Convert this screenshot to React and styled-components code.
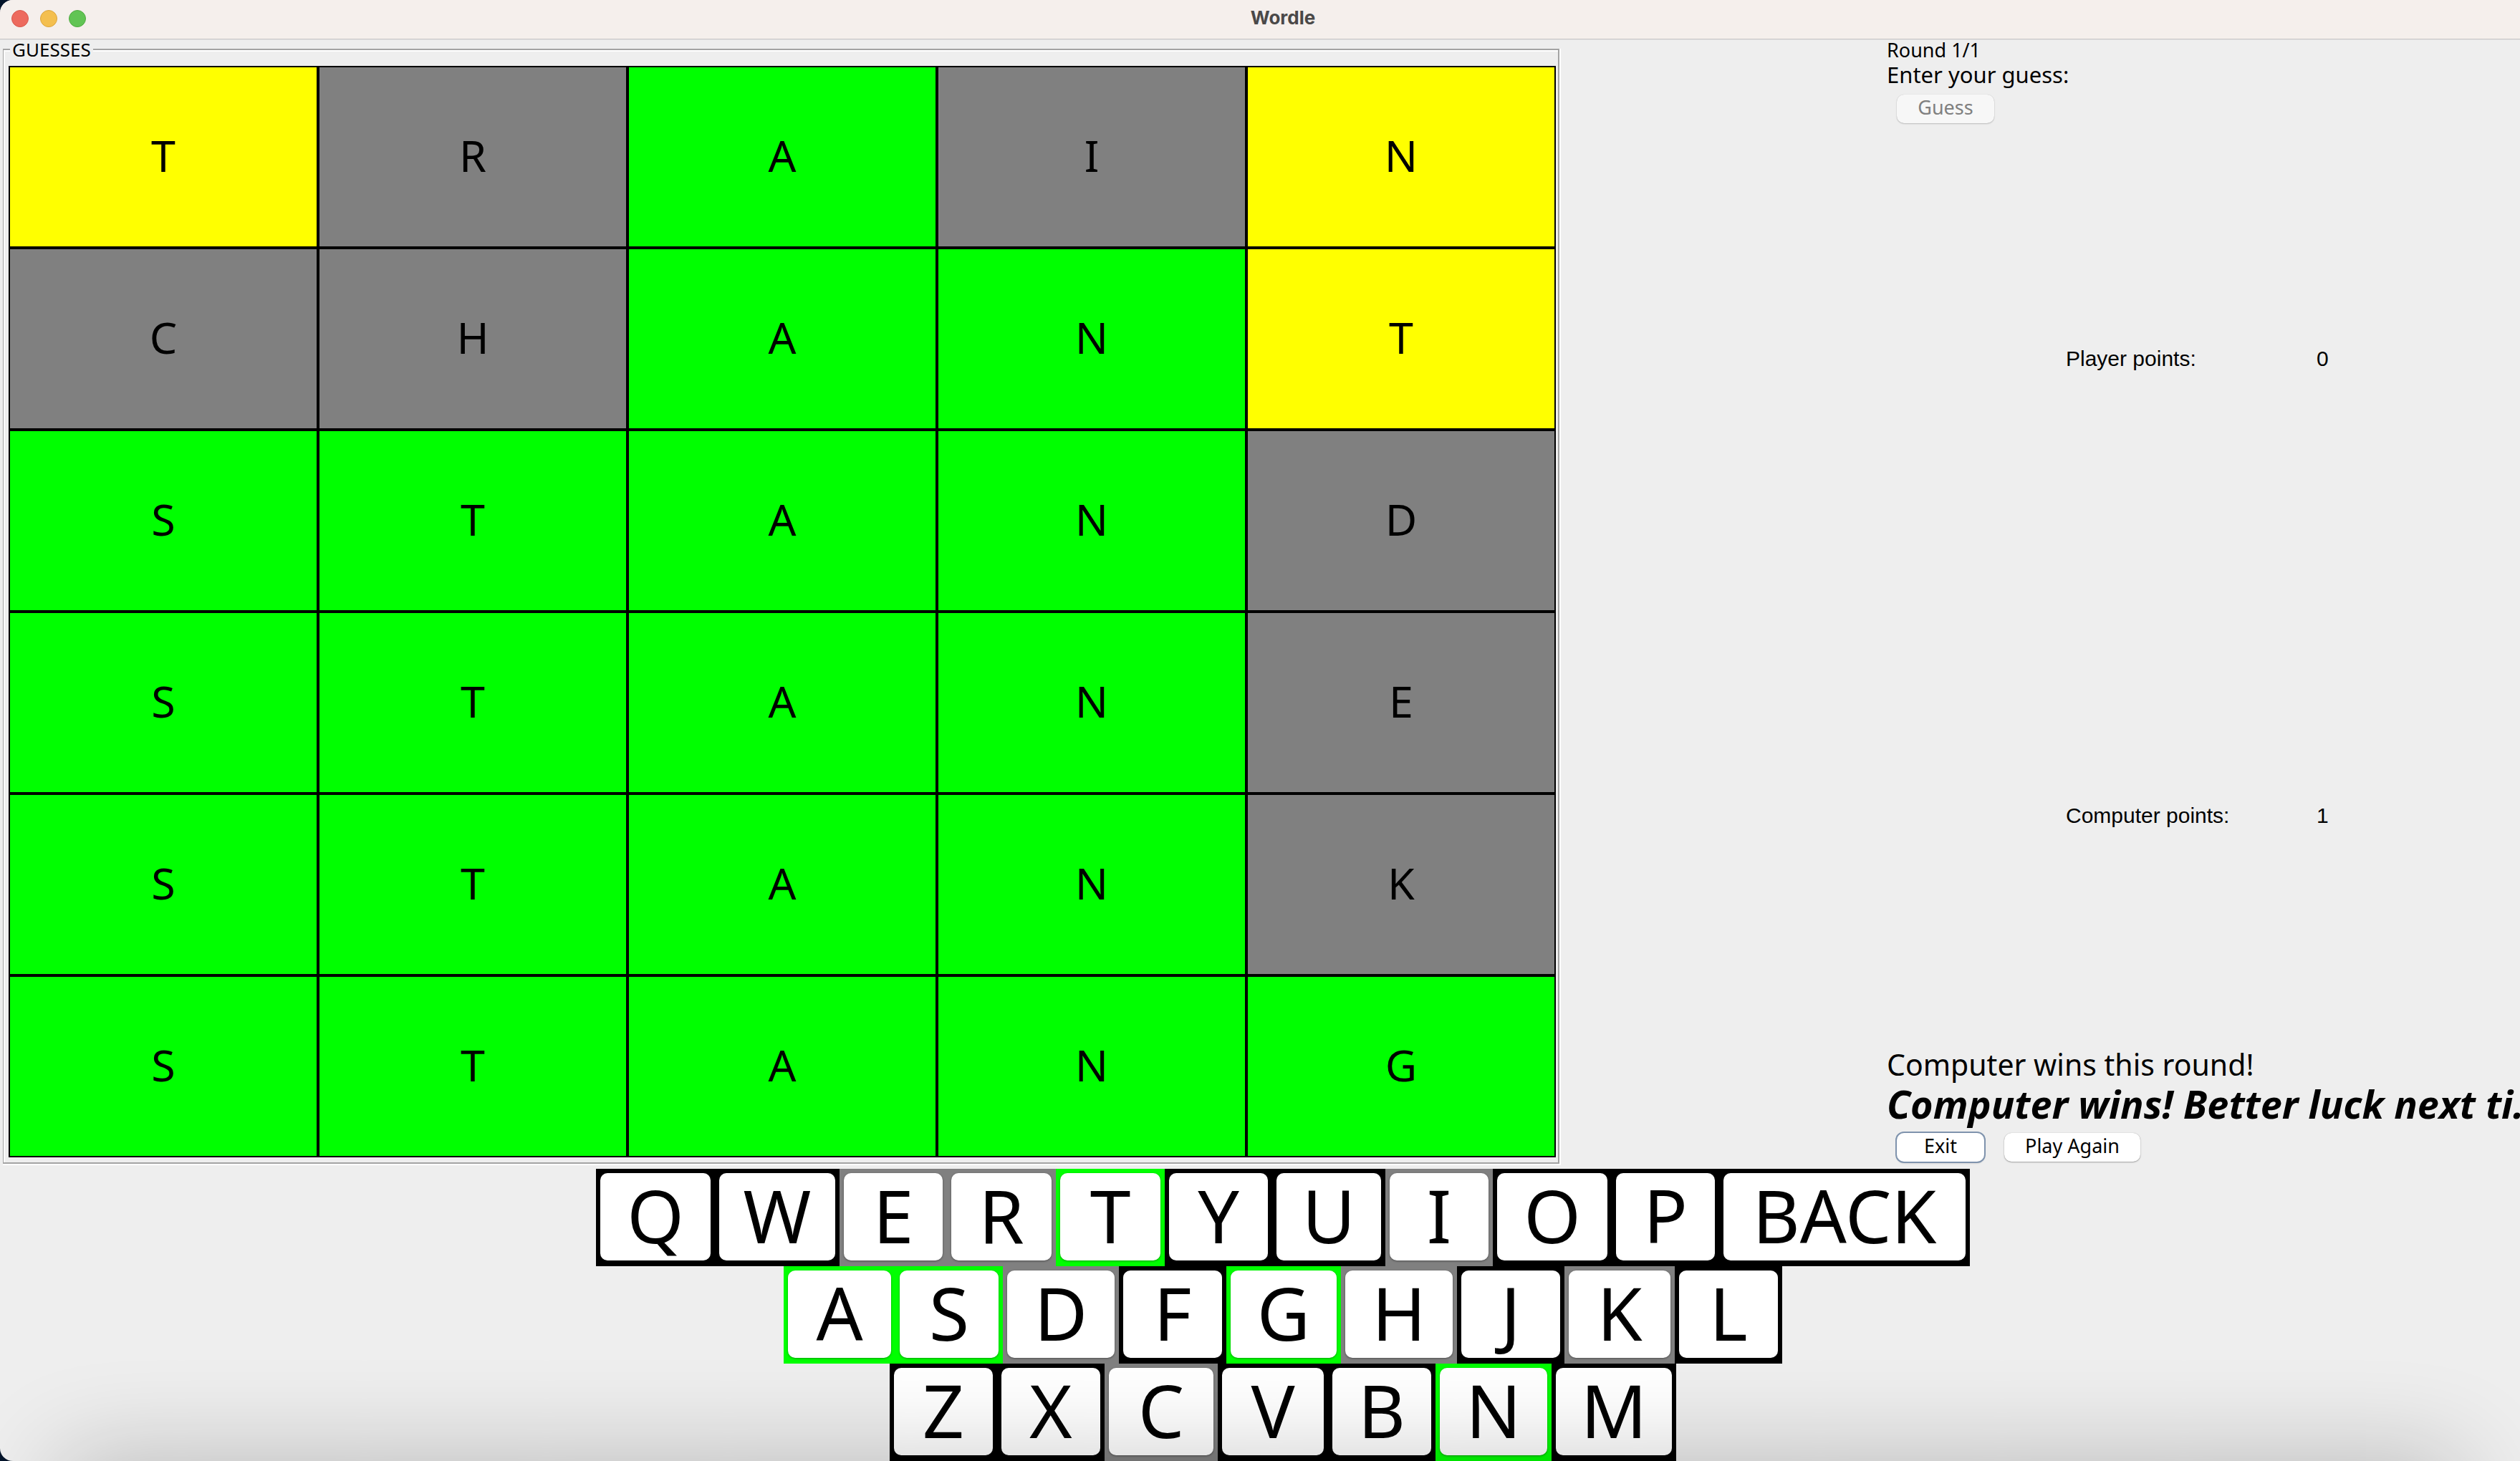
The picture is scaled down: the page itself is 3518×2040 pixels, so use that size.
import React from "react";
import styled, { createGlobalStyle } from "styled-components";

const colors = {
  yellow: "#ffff00",
  gray: "#808080",
  green: "#00ff00",
  black: "#000000",
};

const GlobalStyle = createGlobalStyle`
  * { box-sizing: border-box; }
  html, body, #root { height: 100%; }
  body {
    margin: 0;
    overflow: hidden;
    background: #03142a;
    color: #000;
    font-family: "Noto Sans", "Open Sans", sans-serif;
  }
`;

const Desktop = styled.div`
  position: relative;
  min-height: 100vh;
  overflow: hidden;
  display: flex;
`;

/* The window is a little wider than the screen and runs off its right edge. */
const Window = styled.div`
  flex: none;
  width: calc(100% + 64px);
  display: flex;
  flex-direction: column;
  background: #eeeeee;
  border-radius: 18px;
  overflow: hidden;
`;

const TitleBar = styled.header`
  display: grid;
  grid-template-columns: 1fr auto 1fr;
  align-items: center;
  height: 55px;
  padding: 0 16px 2px;
  background: #f5efec;
  border-bottom: 1px solid #c9c8c8;
`;

const Lights = styled.div`
  display: flex;
  gap: 16px;
`;

const Light = styled.button`
  width: 24px;
  height: 24px;
  padding: 0;
  border: 1px solid ${(p) => p.$edge};
  border-radius: 50%;
  background: ${(p) => p.$fill};
`;

const Title = styled.h1`
  margin: 0;
  padding-bottom: 2px;
  font: 700 26px/32px Inter, sans-serif;
  color: #4a4848;
`;

const Main = styled.main`
  flex: 1;
  display: grid;
  grid-template-columns: 2180fr 454fr 948fr;
  border-top: 1px solid #e2e1e1;
`;

const Board = styled.fieldset`
  display: flex;
  min-width: 0;
  margin: 0 3px 7px 4px;
  padding: 10px 3px 7px 7px;
  border: 2px solid #a3a3a3;
  border-left-width: 1px;
  box-shadow: inset 2px 2px #fff, 2px 0 #fff, 0 2px #fff, 2px 2px #fff;
`;

const Legend = styled.legend`
  margin-left: 2px;
  padding: 0 3px;
  background: #eeeeee;
  font-size: 26px;
  line-height: 26px;
`;

const Grid = styled.div`
  flex: 1;
  height: 100%;
  display: grid;
  grid-template-columns: repeat(5, 1fr);
  grid-auto-rows: 1fr;
`;

const Cell = styled.div`
  display: flex;
  align-items: center;
  justify-content: center;
  padding-bottom: 4px;
  border: 2px solid #000;
  background: ${(p) => colors[p.$state]};
  font-size: 61px;
  line-height: 80px;
`;

const Side = styled.section`
  grid-column: 3;
  display: flex;
  flex-direction: column;
  white-space: nowrap;
`;

const Round = styled.div`
  font-size: 27px;
  line-height: 28px;
`;

const Prompt = styled.div`
  font-size: 31px;
  line-height: 40px;
`;

const Buttons = styled.div`
  display: flex;
  gap: 28px;
  padding: 8px 14px 10px;
`;

const Button = styled.button`
  height: 40px;
  padding: 0 0 4px;
  width: ${(p) => p.$width}px;
  border: 0;
  border-radius: 10px;
  background: #fff;
  box-shadow: ${(p) =>
    p.$focused
      ? "0 0 0 2px #7f93ad, 0 2px 3px rgba(0,0,0,.2)"
      : "0 0 1px rgba(0,0,0,.3), 0 1px 2px rgba(0,0,0,.3)"};
  font-family: inherit;
  font-size: 27px;
  line-height: 36px;
  color: #000;
  &:disabled {
    background: #f7f7f7;
    color: #808080;
    box-shadow: 0 0 1px rgba(0,0,0,.2), 0 1px 2px rgba(0,0,0,.2);
  }
`;

const Scores = styled.dl`
  flex: 1;
  margin: 0;
  padding: 0 0 6px 250px;
  display: grid;
  grid-template-columns: 350px auto;
  grid-auto-rows: 1fr;
  align-items: center;
  justify-content: start;
  font: 30px/36px "Liberation Sans", Arial, sans-serif;
  dd { margin: 0; }
`;

const RoundResult = styled.div`
  font-size: 41px;
  line-height: 44px;
`;

const GameResult = styled.div`
  font-size: 54px;
  font-weight: 700;
  font-style: italic;
  line-height: 66px;
`;

const Keyboard = styled.section`
  display: flex;
  flex-direction: column;
  align-items: center;
`;

const KeyRow = styled.div`
  display: flex;
`;

const KeySlot = styled.div`
  width: ${(p) => p.$width}px;
  height: 136px;
  padding: 6px 6px 8px;
  background: ${(p) => colors[p.$state]};
`;

const Key = styled.button`
  display: flex;
  align-items: center;
  justify-content: center;
  width: 100%;
  height: 122px;
  padding: 0 0 4px;
  border: 0;
  border-radius: 10px;
  background: #fff;
  box-shadow: 0 1px 3px rgba(0, 0, 0, 0.4);
  font-family: inherit;
  font-size: 102px;
  line-height: 118px;
  color: #000;
`;

/* Soft shadow cast upward by the dock hidden below the screen. */
const DockShadow = styled.div`
  position: absolute;
  left: 84px;
  right: 84px;
  bottom: -200px;
  height: 200px;
  box-shadow: 0 0 140px rgba(0, 0, 0, 0.24);
  pointer-events: none;
`;

const guesses = [
  ["TRAIN", "yellow gray green gray yellow"],
  ["CHANT", "gray gray green green yellow"],
  ["STAND", "green green green green gray"],
  ["STANE", "green green green green gray"],
  ["STANK", "green green green green gray"],
  ["STANG", "green green green green green"],
];

const keyRows = [
  [
    ["Q", 166, "black"], ["W", 174, "black"], ["E", 150, "gray"], ["R", 152, "gray"],
    ["T", 152, "green"], ["Y", 150, "black"], ["U", 158, "black"], ["I", 150, "gray"],
    ["O", 166, "black"], ["P", 150, "black"], ["BACK", 350, "black"],
  ],
  [
    ["A", 156, "green"], ["S", 150, "green"], ["D", 162, "gray"], ["F", 150, "black"],
    ["G", 160, "green"], ["H", 162, "gray"], ["J", 150, "black"], ["K", 154, "gray"],
    ["L", 150, "black"],
  ],
  [
    ["Z", 150, "black"], ["X", 150, "black"], ["C", 158, "gray"], ["V", 154, "black"],
    ["B", 150, "black"], ["N", 162, "green"], ["M", 174, "black"],
  ],
];

export default function App() {
  return (
    <Desktop>
      <GlobalStyle />
      <Window>
        <TitleBar>
          <Lights>
            <Light aria-label="Close" $fill="#ed6a5e" $edge="#d8574c" />
            <Light aria-label="Minimize" $fill="#f4bf4f" $edge="#dba43c" />
            <Light aria-label="Zoom" $fill="#61c454" $edge="#4faa41" />
          </Lights>
          <Title>Wordle</Title>
        </TitleBar>
        <Main>
          <Board>
            <Legend>GUESSES</Legend>
            <Grid>
              {guesses.map(([word, states]) =>
                states.split(" ").map((state, i) => (
                  <Cell key={word + i} $state={state}>{word[i]}</Cell>
                ))
              )}
            </Grid>
          </Board>
          <Side>
            <Round>Round 1/1</Round>
            <Prompt>Enter your guess:</Prompt>
            <Buttons>
              <Button $width={136} disabled>Guess</Button>
            </Buttons>
            <Scores>
              <dt>Player points:</dt>
              <dd>0</dd>
              <dt>Computer points:</dt>
              <dd>1</dd>
            </Scores>
            <RoundResult>Computer wins this round!</RoundResult>
            <GameResult>Computer wins! Better luck next ti...</GameResult>
            <Buttons>
              <Button $width={122} $focused>Exit</Button>
              <Button $width={190}>Play Again</Button>
            </Buttons>
          </Side>
        </Main>
        <Keyboard>
          {keyRows.map((row, i) => (
            <KeyRow key={i}>
              {row.map(([label, width, state]) => (
                <KeySlot key={label} $width={width} $state={state}>
                  <Key>{label}</Key>
                </KeySlot>
              ))}
            </KeyRow>
          ))}
        </Keyboard>
      </Window>
      <DockShadow />
    </Desktop>
  );
}
